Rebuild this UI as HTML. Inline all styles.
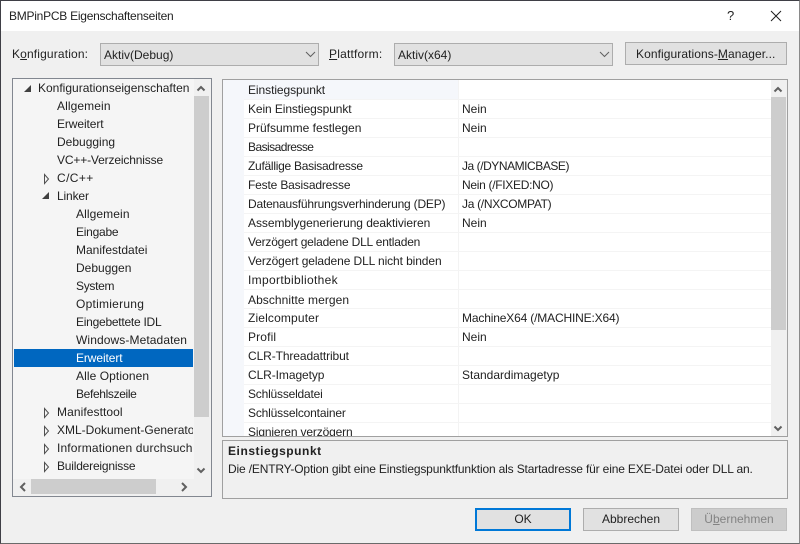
<!DOCTYPE html>
<html><head><meta charset="utf-8">
<style>
html,body{margin:0;padding:0}
#w{position:relative;width:800px;height:544px;background:#f0f0f0;overflow:hidden;font:12px "Liberation Sans",sans-serif;color:#222}
#w div{position:absolute;box-sizing:border-box}
.t{white-space:nowrap;height:18px;line-height:18px}
.w{color:#fff}
u{text-decoration:underline}
svg{position:absolute;left:0;top:0}
</style></head><body><div id="w">
<div style="left:0;top:1px;width:800px;height:30px;background:#fff"></div>
<div class="t" style="left:9px;top:7px;letter-spacing:-.25px">BMPinPCB Eigenschaftenseiten</div>
<div class="t" style="left:727px;top:7px;font-size:13px">?</div>

<div class="t" style="left:12px;top:45px;letter-spacing:.15px">K<u>o</u>nfiguration:</div>
<div style="left:100px;top:43px;width:219px;height:23px;background:#e1e1e1;border:1px solid #adadad"></div>
<div class="t" style="left:104px;top:46px">Aktiv(Debug)</div>
<div class="t" style="left:329px;top:45px;letter-spacing:.2px"><u>P</u>lattform:</div>
<div style="left:394px;top:43px;width:219px;height:23px;background:#e1e1e1;border:1px solid #adadad"></div>
<div class="t" style="left:398px;top:46px">Aktiv(x64)</div>
<div style="left:625px;top:42px;width:162px;height:23px;background:#e1e1e1;border:1px solid #adadad"></div>
<div class="t" style="left:636px;top:45px;letter-spacing:.08px">Konfigurations-<u>M</u>anager...</div>

<!-- tree -->
<div style="left:12px;top:78px;width:200px;height:419px;background:#f5f5f5;border:1px solid #828790"></div>
<div style="left:194px;top:79px;width:17px;height:400px;background:#f0f0f0"></div>
<div style="left:194px;top:96px;width:15px;height:321px;background:#cdcdcd"></div>
<div style="left:13px;top:479px;width:198px;height:17px;background:#f0f0f0"></div>
<div style="left:31px;top:479px;width:125px;height:15px;background:#cdcdcd"></div>
<div style="left:14px;top:349px;width:179px;height:18px;background:#0067c0"></div>
<div class="t" style="left:38px;top:79px">Konfigurationseigenschaften</div>
<div class="t" style="left:57px;top:97px;letter-spacing:.1px">Allgemein</div>
<div class="t" style="left:57px;top:115px;letter-spacing:-.1px">Erweitert</div>
<div class="t" style="left:57px;top:133px">Debugging</div>
<div class="t" style="left:57px;top:151px;letter-spacing:-.15px">VC++-Verzeichnisse</div>
<div class="t" style="left:57px;top:169px;letter-spacing:.4px">C/C++</div>
<div class="t" style="left:57px;top:187px;letter-spacing:-.15px">Linker</div>
<div class="t" style="left:76px;top:205px;letter-spacing:.1px">Allgemein</div>
<div class="t" style="left:76px;top:223px;letter-spacing:-.25px">Eingabe</div>
<div class="t" style="left:76px;top:241px">Manifestdatei</div>
<div class="t" style="left:76px;top:259px">Debuggen</div>
<div class="t" style="left:76px;top:277px;letter-spacing:-.3px">System</div>
<div class="t" style="left:76px;top:295px;letter-spacing:.25px">Optimierung</div>
<div class="t" style="left:76px;top:313px;letter-spacing:-.25px">Eingebettete IDL</div>
<div class="t" style="left:76px;top:331px;letter-spacing:.1px">Windows-Metadaten</div>
<div class="t w" style="left:76px;top:349px;letter-spacing:-.1px">Erweitert</div>
<div class="t" style="left:76px;top:367px;letter-spacing:.08px">Alle Optionen</div>
<div class="t" style="left:76px;top:385px;letter-spacing:-.35px">Befehlszeile</div>
<div class="t" style="left:57px;top:403px;letter-spacing:.08px">Manifesttool</div>
<div class="t" style="left:57px;top:421px;width:136px;overflow:hidden">XML-Dokument-Generator</div>
<div class="t" style="left:57px;top:439px;width:136px;overflow:hidden;letter-spacing:.15px">Informationen durchsuchen</div>
<div class="t" style="left:57px;top:457px;letter-spacing:-.2px">Buildereignisse</div>

<!-- grid -->
<div style="left:222px;top:79px;width:566px;height:358px;background:#fff;border:1px solid #a0a0a0"></div>
<div style="left:223px;top:80px;width:21px;height:356px;background:#f5f7fb"></div>
<div style="left:244px;top:80px;width:214px;height:20px;background:#f5f7fb"></div>
<div style="left:771px;top:80px;width:16px;height:356px;background:#f0f0f0"></div>
<div style="left:771px;top:97px;width:15px;height:233px;background:#cdcdcd"></div>
<div style="left:458px;top:80px;width:1px;height:356px;background:#f3f3f3"></div>
<svg width="800" height="544">
<path stroke="#f4f4f4" stroke-width="1" d="M244 118.500H771M244 137.500H771M244 156.500H771M244 175.500H771M244 194.500H771M244 213.500H771M244 232.500H771M244 251.500H771M244 270.500H771M244 289.500H771M244 308.500H771M244 327.500H771M244 346.500H771M244 365.500H771M244 384.500H771M244 403.500H771M244 422.500H771M244 99.500H771"/>
</svg>
<div class="t" style="left:248px;top:81px;letter-spacing:-.07px">Einstiegspunkt</div>
<div class="t" style="left:248px;top:100px;letter-spacing:-.1px">Kein Einstiegspunkt</div><div class="t" style="left:462px;top:100px">Nein</div>
<div class="t" style="left:248px;top:119px">Prüfsumme festlegen</div><div class="t" style="left:462px;top:119px">Nein</div>
<div class="t" style="left:248px;top:138px;letter-spacing:-.55px">Basisadresse</div>
<div class="t" style="left:248px;top:157px;letter-spacing:-.27px">Zufällige Basisadresse</div><div class="t" style="left:462px;top:157px;letter-spacing:-.45px">Ja (/DYNAMICBASE)</div>
<div class="t" style="left:248px;top:176px;letter-spacing:-.17px">Feste Basisadresse</div><div class="t" style="left:462px;top:176px;letter-spacing:-.3px">Nein (/FIXED:NO)</div>
<div class="t" style="left:248px;top:195px;letter-spacing:-.2px">Datenausführungsverhinderung (DEP)</div><div class="t" style="left:462px;top:195px;letter-spacing:-.3px">Ja (/NXCOMPAT)</div>
<div class="t" style="left:248px;top:214px;letter-spacing:-.06px">Assemblygenerierung deaktivieren</div><div class="t" style="left:462px;top:214px">Nein</div>
<div class="t" style="left:248px;top:233px;letter-spacing:-.2px">Verzögert geladene DLL entladen</div>
<div class="t" style="left:248px;top:252px;letter-spacing:-.1px">Verzögert geladene DLL nicht binden</div>
<div class="t" style="left:248px;top:271px;letter-spacing:.33px">Importbibliothek</div>
<div class="t" style="left:248px;top:291px;letter-spacing:.06px">Abschnitte mergen</div>
<div class="t" style="left:248px;top:309px;letter-spacing:.15px">Zielcomputer</div><div class="t" style="left:462px;top:309px;letter-spacing:-.16px">MachineX64 (/MACHINE:X64)</div>
<div class="t" style="left:248px;top:328px;letter-spacing:.15px">Profil</div><div class="t" style="left:462px;top:328px">Nein</div>
<div class="t" style="left:248px;top:347px;letter-spacing:-.1px">CLR-Threadattribut</div>
<div class="t" style="left:248px;top:366px;letter-spacing:-.08px">CLR-Imagetyp</div><div class="t" style="left:462px;top:366px">Standardimagetyp</div>
<div class="t" style="left:248px;top:385px;letter-spacing:-.2px">Schlüsseldatei</div>
<div class="t" style="left:248px;top:404px;letter-spacing:-.17px">Schlüsselcontainer</div>
<div style="left:248px;top:423px;width:200px;height:13px;overflow:hidden"><div class="t" style="left:0;top:0;letter-spacing:-.15px">Signieren verzögern</div></div>

<!-- description -->
<div style="left:222px;top:440px;width:566px;height:59px;background:#f0f0f0;border:1px solid #a0a0a0"></div>
<div class="t" style="left:228px;top:442px;font-weight:bold;letter-spacing:.55px">Einstiegspunkt</div>
<div class="t" style="left:228px;top:460px;letter-spacing:-.16px">Die /ENTRY-Option gibt eine Einstiegspunktfunktion als Startadresse für eine EXE-Datei oder DLL an.</div>

<!-- buttons -->
<div style="left:475px;top:508px;width:96px;height:23px;background:#e1e1e1;border:2px solid #0078d7"></div>
<div class="t" style="left:475px;top:510px;width:96px;text-align:center">OK</div>
<div style="left:583px;top:508px;width:96px;height:23px;background:#e1e1e1;border:1px solid #adadad"></div>
<div class="t" style="left:583px;top:510px;width:96px;text-align:center">Abbrechen</div>
<div style="left:691px;top:508px;width:96px;height:23px;background:#cccccc;border:1px solid #bfbfbf"></div>
<div class="t" style="left:691px;top:510px;width:96px;text-align:center;color:#838383">Ü<u>b</u>ernehmen</div>

<!-- window border and icons -->
<div style="left:0;top:0;width:800px;height:544px;border:1px solid #3f3f46;border-right-color:#8a8a8a;border-bottom-color:#6a6a6a"></div>
<svg width="800" height="544" fill="none">
<path stroke="#1e1e1e" d="M771 11L781 21M781 11L771 21"/>
<path stroke="#606060" d="M306 52L310.500 56.500L315 52M600 52L604.500 56.500L609 52"/>
<path fill="#404040" d="M24 92H31V85Z"/>
<path fill="#404040" d="M42 199H49V192Z"/>
<path stroke="#505050" d="M44.500 174.500V183.500L48.500 179ZM44.500 408.500V417.500L48.500 413ZM44.500 426.500V435.500L48.500 431ZM44.500 444.500V453.500L48.500 449ZM44.500 462.500V471.500L48.500 467Z"/>
<g stroke="#606060" stroke-width="2">
<path d="M197.500 90.500L201 87L204.500 90.500M197.500 468.500L201 472L204.500 468.500M25 483L21 487L25 491M182 483L186 487L182 491M774.500 91.500L778 88L781.500 91.500M774.500 426.500L778 430L781.500 426.500"/>
</g>
</svg>
</div></body></html>
